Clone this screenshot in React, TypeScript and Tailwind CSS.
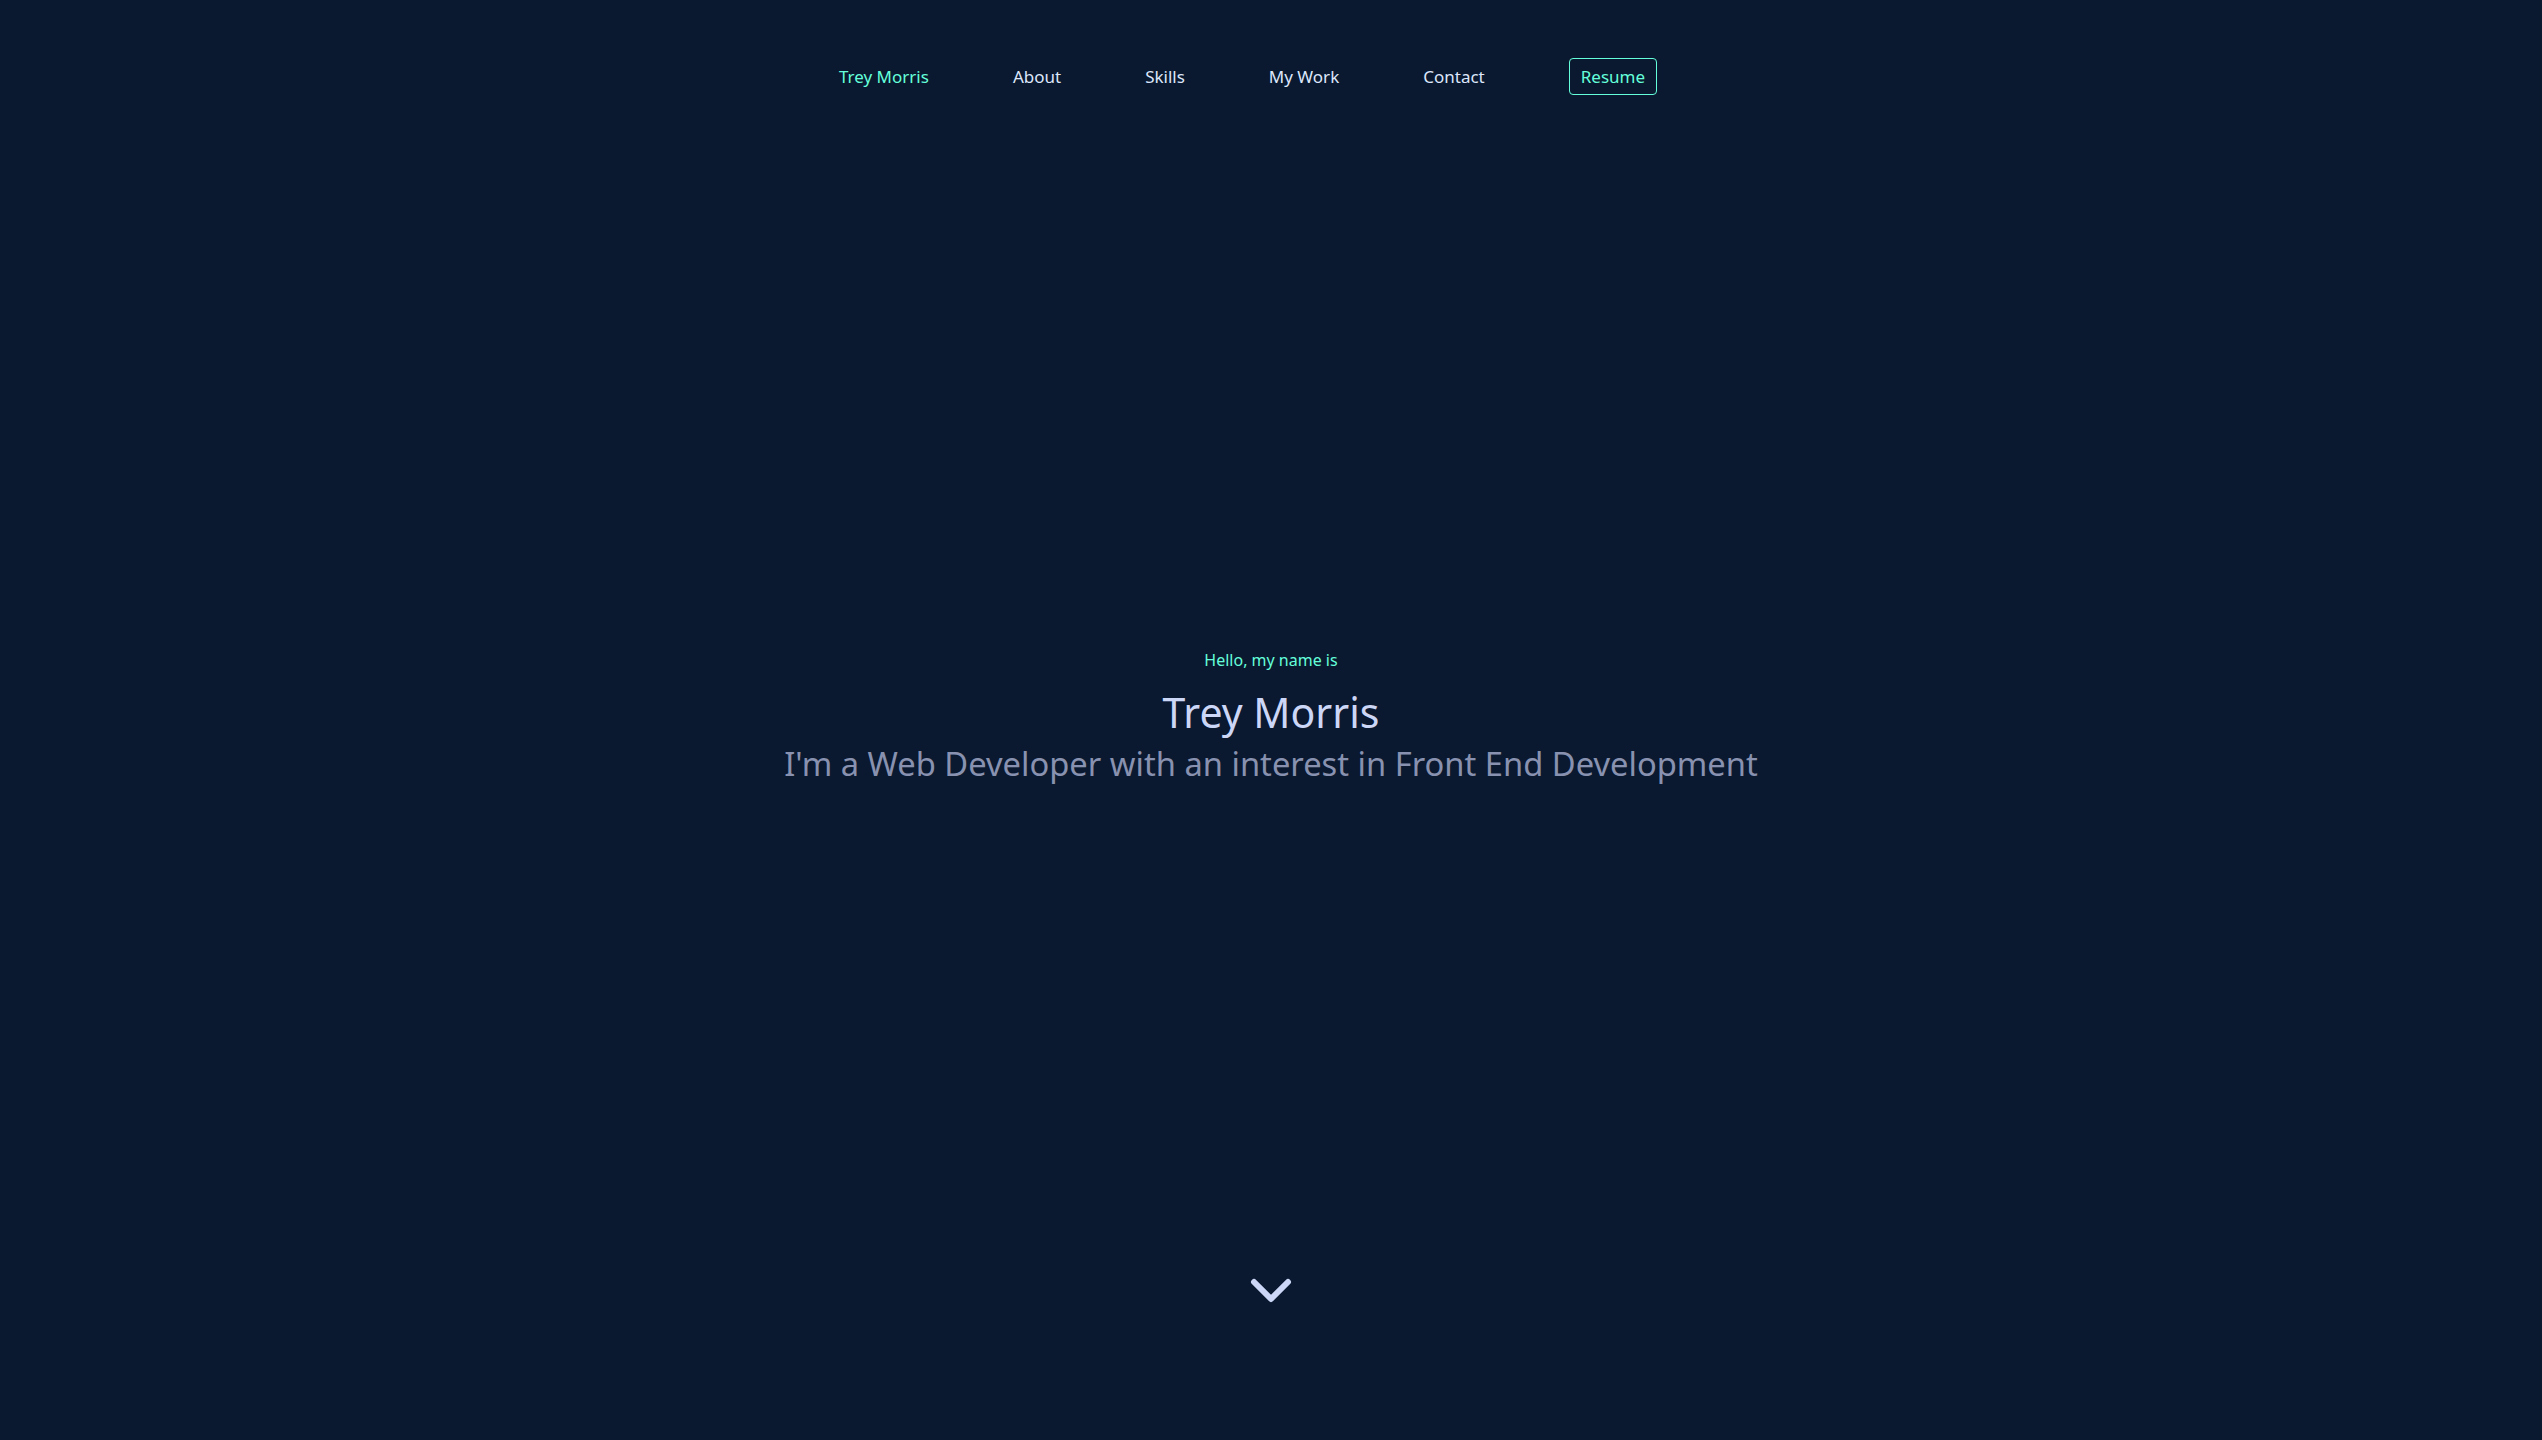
const links = ["About", "Skills", "My Work", "Contact"];

export default function App() {
  return (
    <div
      className="h-screen w-full flex flex-col bg-[#0a192f] text-[#ccd6f6]"
      style={{ fontFamily: '"Noto Sans", "Open Sans", sans-serif' }}
    >
      <nav className="h-[220px] shrink-0 pt-[58px] pr-[46px]">
        <ul className="flex items-center justify-center gap-[84px] text-[17px]">
          <li className="text-[#64ffda]">Trey Morris</li>
          {links.map((l) => (
            <li key={l} className="text-[#dde6fb]">
              {l}
            </li>
          ))}
          <li>
            <button className="h-[37px] px-[11px] rounded-[4px] border border-[#64ffda] text-[#64ffda] text-[17px]">
              Resume
            </button>
          </li>
        </ul>
      </nav>

      <main className="flex-1 flex flex-col items-center justify-center text-center pb-[8px]">
        <p className="text-[16px] text-[#64ffda]">Hello, my name is</p>
        <h1 className="mt-[16px] mb-[7px] text-[41px] leading-[1.2] text-[#ccd6f6]">Trey Morris</h1>
        <h2 className="text-[32.7px] leading-[1.2] text-[#8892b0]">
          I'm a Web Developer with an interest in Front End Development
        </h2>
      </main>

      <div className="h-[220px] shrink-0 flex justify-center pt-[57px]">
        <svg width="42" height="28" viewBox="0 0 42 28" fill="none">
          <polyline
            points="4,5 21,22 38,5"
            stroke="#ccd6f6"
            strokeWidth="6"
            strokeLinecap="round"
            strokeLinejoin="round"
          />
        </svg>
      </div>
    </div>
  );
}
